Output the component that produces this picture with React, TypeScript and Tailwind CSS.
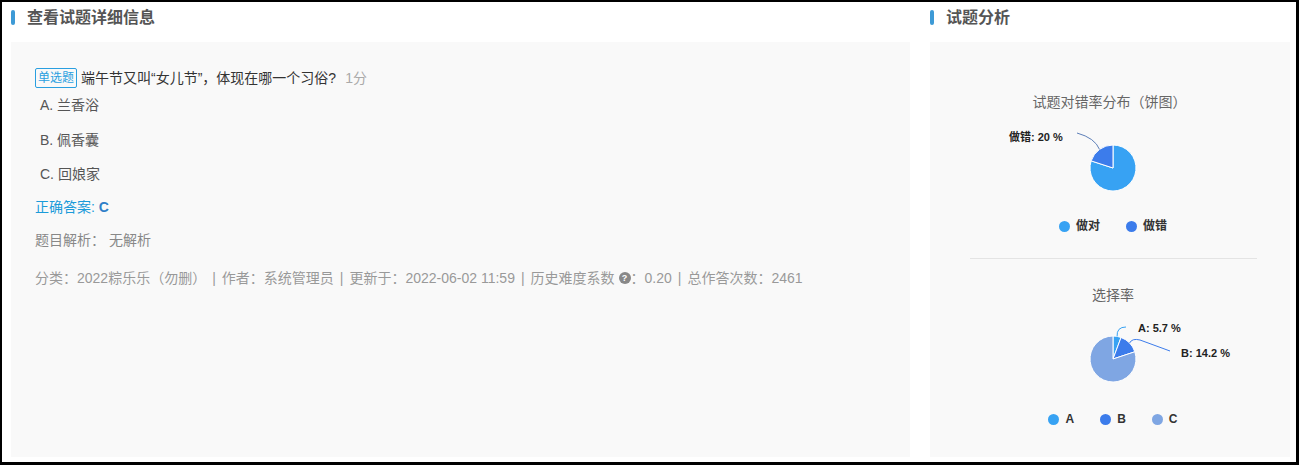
import React from "react";

const font = { fontFamily: '"Liberation Sans", "Noto Sans CJK SC", sans-serif' };

function Header({ title }: { title: string }) {
  return (
    <div className="flex items-center h-[31px]">
      <span className="block w-[4px] h-[15px] rounded-sm bg-[#3d9ad6]" />
      <span className="ml-[12px] text-[16px] font-bold text-[#555] leading-[16px]">{title}</span>
    </div>
  );
}

function Legend({ items }: { items: { label: string; color: string }[] }) {
  return (
    <div className="flex justify-center items-center h-[16px] gap-[26px] pl-[6px]">
      {items.map((it) => (
        <div key={it.label} className="flex items-center gap-[6px]">
          <span className="block w-[11px] h-[11px] rounded-full" style={{ background: it.color }} />
          <span className="text-[12px] font-bold text-[#333]">{it.label}</span>
        </div>
      ))}
    </div>
  );
}

function WrongPie() {
  return (
    <svg width="360" height="90" className="block">
      <path d="M183 56 L183 33 A23 23 0 1 1 161.13 48.89 Z" fill="#37a2f3" stroke="#fff" strokeWidth="1" />
      <path d="M183 56 L161.13 48.89 A23 23 0 0 1 183 33 Z" fill="#3c7ceb" stroke="#fff" strokeWidth="1" />
      <path d="M169.5 37.4 Q165 26 147 21" fill="none" stroke="#5d7fb8" strokeWidth="1" />
      <text x="79" y="29" fontSize="11" fontWeight="bold" fill="#222">做错: 20 %</text>
    </svg>
  );
}

function ChoicePie() {
  return (
    <svg width="360" height="90" className="block">
      <path d="M183 54 L183 31 A23 23 0 0 1 191.06 32.46 Z" fill="#37a2f3" stroke="#fff" strokeWidth="1" />
      <path d="M183 54 L191.06 32.46 A23 23 0 0 1 204.83 46.76 Z" fill="#3c7ceb" stroke="#fff" strokeWidth="1" />
      <path d="M183 54 L204.83 46.76 A23 23 0 1 1 183 31 Z" fill="#7fa6e3" stroke="#fff" strokeWidth="1" />
      <path d="M187.1 31.4 Q186.5 22 196 22" fill="none" stroke="#37a2f3" strokeWidth="1" />
      <path d="M199.6 38 Q202 33 210 35 L240 46" fill="none" stroke="#3c7ceb" strokeWidth="1" />
      <text x="208" y="27" fontSize="11" fontWeight="bold" fill="#222">A: 5.7 %</text>
      <text x="251" y="52" fontSize="11" fontWeight="bold" fill="#222">B: 14.2 %</text>
    </svg>
  );
}

function Sep() {
  return <span className="mx-[6px]">|</span>;
}

export default function App() {
  return (
    <div
      className="w-[1299px] h-[465px] bg-white border-black border-l-2 border-t-2 border-r-[3px] border-b-[3px] flex pl-[9px] gap-[20px]"
      style={font}
    >
      <div className="w-[899px] flex flex-col">
        <Header title="查看试题详细信息" />
        <div className="mt-[9px] h-[415px] bg-[#f9f9f9] pl-[24px] pt-[26px] text-[14px]">
          <div className="flex items-center h-[20px]">
            <span className="border border-[#2a9fe0] text-[#2a9fe0] text-[12px] leading-[18px] px-[2px] rounded-[2px]">
              单选题
            </span>
            <span className="ml-[4px] text-[#333]">端午节又叫“女儿节”，体现在哪一个习俗?</span>
            <span className="ml-[9px] text-[#aaa]">1分</span>
          </div>
          <div className="mt-[7px] leading-[20px] pl-[5px] text-[#555]">A. 兰香浴</div>
          <div className="mt-[15px] leading-[20px] pl-[5px] text-[#555]">B. 佩香囊</div>
          <div className="mt-[14px] leading-[20px] pl-[5px] text-[#555]">C. 回娘家</div>
          <div className="mt-[13px] leading-[20px] text-[#1a9bd9]">
            正确答案: <span className="font-bold text-[#2f7fc8]">C</span>
          </div>
          <div className="mt-[13px] leading-[20px] text-[#888]">题目解析：&nbsp;无解析</div>
          <div className="mt-[18px] leading-[20px] text-[#999] flex items-center whitespace-pre">
            <span>分类：2022粽乐乐（勿删）</span>
            <Sep />
            <span>作者：系统管理员</span>
            <Sep />
            <span>更新于：2022-06-02 11:59</span>
            <Sep />
            <span>历史难度系数</span>
            <span className="ml-[4px] inline-flex items-center justify-center w-[12px] h-[12px] rounded-full bg-[#888] text-white text-[9px] font-bold leading-none">
              ?
            </span>
            <span>：0.20</span>
            <Sep />
            <span>总作答次数：2461</span>
          </div>
        </div>
      </div>
      <div className="w-[360px] flex flex-col">
        <Header title="试题分析" />
        <div className="mt-[9px] h-[415px] bg-[#f9f9f9] pt-[50px] flex flex-col">
          <div className="h-[20px] leading-[20px] text-[14px] text-[#666] text-center pr-[1px]">
            试题对错率分布（饼图）
          </div>
          <WrongPie />
          <div className="mt-[16px]">
            <Legend
              items={[
                { label: "做对", color: "#37a2f3" },
                { label: "做错", color: "#3c7ceb" },
              ]}
            />
          </div>
          <div className="mt-[24px] ml-[40px] mr-[33px] h-px bg-[#e4e4e4]" />
          <div className="mt-[26px] h-[20px] leading-[20px] text-[14px] text-[#666] text-center pl-[6px]">
            选择率
          </div>
          <ChoicePie />
          <div className="mt-[16px]">
            <Legend
              items={[
                { label: "A", color: "#37a2f3" },
                { label: "B", color: "#3c7ceb" },
                { label: "C", color: "#7fa6e3" },
              ]}
            />
          </div>
        </div>
      </div>
    </div>
  );
}
